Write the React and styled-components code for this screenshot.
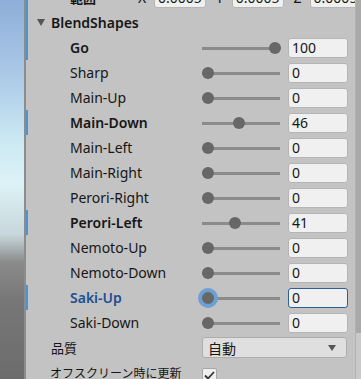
import React from 'react';
import styled, { createGlobalStyle, css } from 'styled-components';

const GlobalStyle = createGlobalStyle`
  html, body {
    margin: 0;
    padding: 0;
    width: 361px;
    height: 379px;
    overflow: hidden;
  }
  body {
    font-family: "Noto Sans", "Noto Sans CJK JP", sans-serif;
    font-size: 14px;
    color: #161616;
  }
`;

const Screen = styled.div`
  display: flex;
  width: 361px;
  height: 379px;
  overflow: hidden;
`;

const SceneStrip = styled.div`
  width: 24px;
  flex-shrink: 0;
  background: linear-gradient(
    to bottom,
    #8eaed8 0px,
    #a9c7e6 70px,
    #cbe8f2 140px,
    #dcf2f6 185px,
    #c7d6da 235px,
    #8b8b8b 262px,
    #777777 300px,
    #6c6c6c 379px
  );
`;

const Panel = styled.div`
  flex: 1;
  background: #c3c3c3;
  border-left: 2px solid #8c8c8c;
  display: flex;
  flex-direction: column;
  overflow: hidden;
`;

const Rows = styled.div`
  margin-top: -15px;
  display: flex;
  flex-direction: column;
`;

const Scrollbar = styled.div`
  width: 5px;
  flex-shrink: 0;
  background: #c9c9c9;
  border-left: 1px solid #b3b3b3;
  display: flex;
  flex-direction: column;
`;

const ScrollThumb = styled.div`
  height: 333px;
  background: #a9a9a9;
`;

const Row = styled.div`
  height: 25px;
  flex-shrink: 0;
  display: flex;
  align-items: center;
  padding-left: ${(p) => p.$indent}px;
  padding-right: 8px;
  box-shadow: ${(p) => (p.$override ? 'inset 2px 0 0 #4b94cf' : 'none')};
`;

const Label = styled.div`
  width: ${(p) => p.$width}px;
  flex-shrink: 0;
  white-space: nowrap;
  overflow: hidden;
  font-size: ${(p) => p.$size || 14}px;
  font-weight: ${(p) => (p.$bold ? 600 : 400)};
  color: ${(p) => (p.$focus ? '#1c4f92' : '#161616')};
`;

const Foldout = styled.span`
  display: inline-block;
  width: 0;
  height: 0;
  border-left: 4px solid transparent;
  border-right: 4px solid transparent;
  border-top: 7px solid #555;
  margin-right: 6px;
  vertical-align: 2px;
`;

const SliderBox = styled.div`
  position: relative;
  width: 78px;
  height: 20px;
  flex-shrink: 0;
  margin-right: 8px;
  &::before {
    content: '';
    position: absolute;
    left: 0;
    right: 0;
    top: 9px;
    height: 3px;
    background: #8b8b8b;
  }
`;

const Thumb = styled.div`
  position: absolute;
  top: 4px;
  width: 12px;
  height: 12px;
  margin-left: -6px;
  border-radius: 50%;
  background: #676767;
  ${(p) =>
    p.$focus &&
    css`
      box-shadow: 0 0 0 4px #6c9fd3;
    `}
`;

const Field = styled.div`
  box-sizing: border-box;
  width: ${(p) => (p.$width ? `${p.$width}px` : 'auto')};
  flex: ${(p) => (p.$width ? 'none' : 1)};
  height: 20px;
  border-radius: 3px;
  background: #f0f0f0;
  border: 1px solid ${(p) => (p.$focus ? '#2f5f96' : '#b5b5b5')};
  padding: 0 3px;
  display: flex;
  align-items: center;
  overflow: hidden;
  white-space: nowrap;
  font-size: 14px;
`;

const Axis = styled.div`
  flex: 1;
  display: flex;
  align-items: center;
  span {
    width: 26px;
    padding-left: 10px;
    box-sizing: border-box;
    flex-shrink: 0;
  }
`;

const Dropdown = styled.div`
  box-sizing: border-box;
  width: 146px;
  height: 21px;
  border-radius: 3px;
  background: #dfdfdf;
  border: 1px solid #adadad;
  display: flex;
  align-items: center;
  justify-content: space-between;
  padding: 0 10px 0 5px;
  font-size: 14px;
  &::after {
    content: '';
    border-left: 4px solid transparent;
    border-right: 4px solid transparent;
    border-top: 6px solid #555;
  }
`;

const Check = styled.div`
  box-sizing: border-box;
  width: 15px;
  height: 15px;
  margin-top: 6px;
  border-radius: 2px;
  background: #efefef;
  border: 1px solid #a8a8a8;
  display: flex;
  align-items: center;
  justify-content: center;
`;

const shapes = [
  { name: 'Go', value: 100, override: true },
  { name: 'Sharp', value: 0 },
  { name: 'Main-Up', value: 0 },
  { name: 'Main-Down', value: 46, override: true },
  { name: 'Main-Left', value: 0 },
  { name: 'Main-Right', value: 0 },
  { name: 'Perori-Right', value: 0 },
  { name: 'Perori-Left', value: 41, override: true },
  { name: 'Nemoto-Up', value: 0 },
  { name: 'Nemoto-Down', value: 0 },
  { name: 'Saki-Up', value: 0, override: true, focus: true },
  { name: 'Saki-Down', value: 0 },
];

const ShapeRow = ({ name, value, override, focus }) => (
  <Row $indent={44} $override={override}>
    <Label $width={132} $bold={override} $focus={focus}>
      {name}
    </Label>
    <SliderBox>
      <Thumb $focus={focus} style={{ left: 6 + (value / 100) * 67 }} />
    </SliderBox>
    <Field $width={60} $focus={focus}>
      {value}
    </Field>
  </Row>
);

export default function App() {
  return (
    <>
      <GlobalStyle />
      <Screen>
        <SceneStrip />
        <Panel>
          <Rows>
            <Row $indent={44} $override>
              <Label $width={58} $bold $size={13}>
                範囲
              </Label>
              {['X', 'Y', 'Z'].map((a) => (
                <Axis key={a}>
                  <span>{a}</span>
                  <Field>0.0005</Field>
                </Axis>
              ))}
            </Row>
            <Row $indent={11} $override>
              <Label $width={200} $bold>
                <Foldout />
                BlendShapes
              </Label>
            </Row>
            {shapes.map((s) => (
              <ShapeRow key={s.name} {...s} />
            ))}
            <Row $indent={25}>
              <Label $width={151} $size={13}>
                品質
              </Label>
              <Dropdown>自動</Dropdown>
            </Row>
            <Row $indent={24}>
              <Label $width={152} $size={12}>
                オフスクリーン時に更新
              </Label>
              <Check>
                <svg width="11" height="9" viewBox="0 0 11 9">
                  <path d="M1 4.5 L4 7.5 L10 1" fill="none" stroke="#333" strokeWidth="1.8" />
                </svg>
              </Check>
            </Row>
          </Rows>
        </Panel>
        <Scrollbar>
          <ScrollThumb />
        </Scrollbar>
      </Screen>
    </>
  );
}
